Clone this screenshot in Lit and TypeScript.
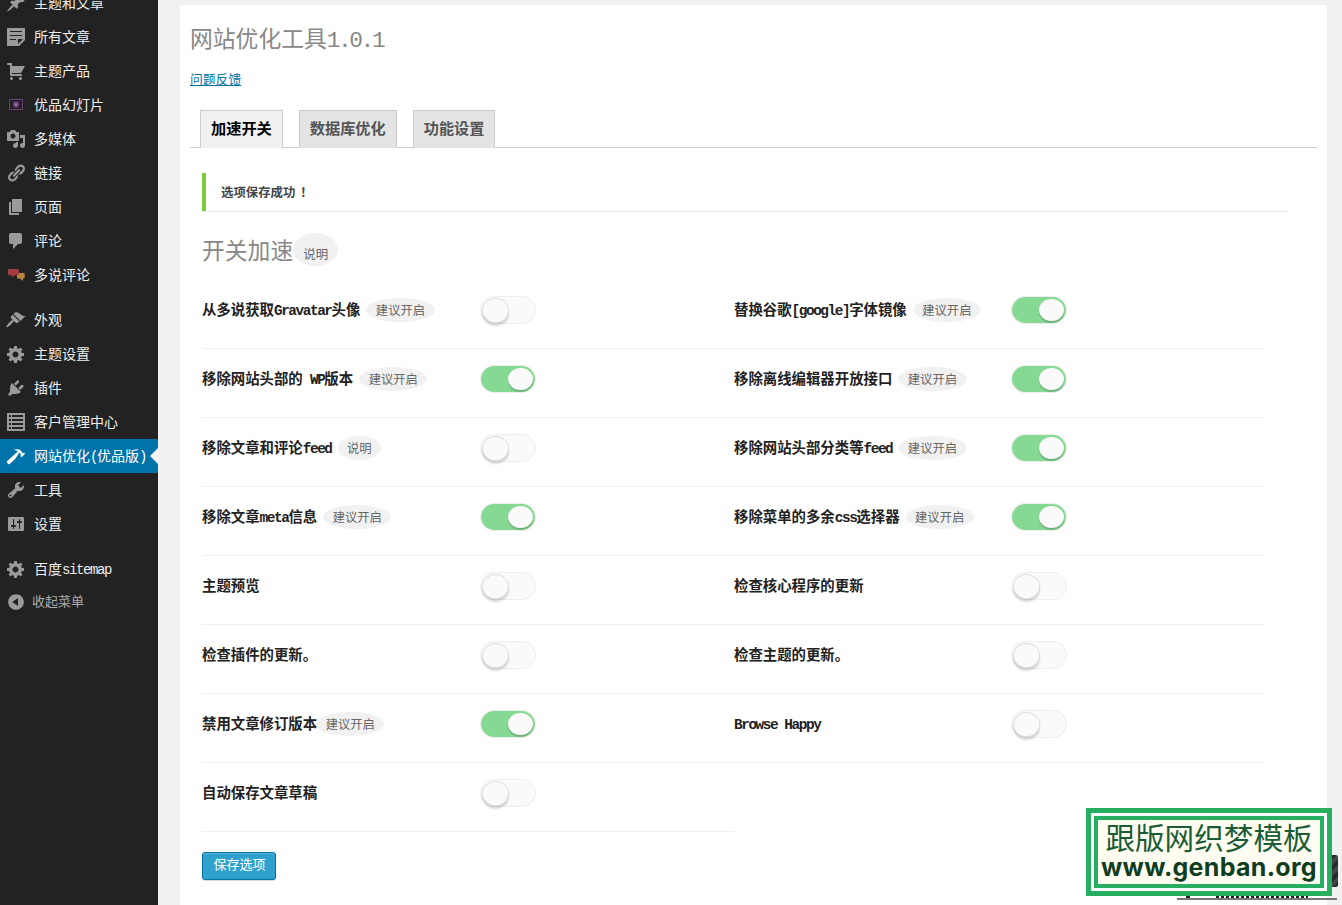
import { LitElement, html, css, svg } from "lit";
import { customElement } from "lit/decorators.js";

const I: Record<string, string> = {
  pin: "M10.44 3.02l1.82-1.82 6.36 6.35-1.83 1.82c-1.05-.68-2.48-.57-3.41.36l-.75.75c-.92.93-1.04 2.35-.35 3.41l-1.83 1.82-2.41-2.41-2.8 2.79c-.42.42-3.38 2.71-3.8 2.29s1.86-3.39 2.28-3.81l2.79-2.79L4.1 9.36l1.83-1.82c1.05.69 2.48.57 3.4-.36l.75-.75c.93-.92 1.05-2.35.36-3.41z",
  aside: "M1 1h18v12l-6 6H1V1zm3 3v1h12V4H4zm0 4v1h12V8H4zm6 5v-1H4v1h6zm2 4l5-5h-5v5z",
  cart: "M6 13h9c.55 0 1 .45 1 1s-.45 1-1 1H5c-.55 0-1-.45-1-1V4H2c-.55 0-1-.45-1-1s.45-1 1-1h3c.55 0 1 .45 1 1v2h13l-4 7H6v1zm-.5 3c.83 0 1.5.67 1.5 1.5S6.33 19 5.5 19 4 18.33 4 17.5 4.67 16 5.5 16zm9 0c.83 0 1.5.67 1.5 1.5s-.67 1.5-1.5 1.5-1.5-.67-1.5-1.5.67-1.5 1.5-1.5z",
  media: "M13 11V4c0-.55-.45-1-1-1h-1.67L9 1H5L3.67 3H2c-.55 0-1 .45-1 1v7c0 .55.45 1 1 1h10c.55 0 1-.45 1-1zM7 4.5c1.38 0 2.5 1.12 2.5 2.5S8.38 9.5 7 9.5 4.5 8.38 4.5 7 5.62 4.5 7 4.5zM14 6h5v10.5c0 1.38-1.12 2.5-2.5 2.5S14 17.88 14 16.5s1.12-2.5 2.5-2.5c.17 0 .34.02.5.05V9h-3V6zm-4 8.05V13h2v3.5c0 1.38-1.12 2.5-2.5 2.5S7 17.88 7 16.5 8.12 14 9.5 14c.17 0 .34.02.5.05z",
  link: "M17.74 2.76c1.68 1.69 1.68 4.41 0 6.1l-1.53 1.52c-1.12 1.12-2.7 1.47-4.14 1.09l2.62-2.61.76-.77.76-.76c.84-.84.84-2.2 0-3.04-.84-.85-2.2-.85-3.04 0l-.77.76-3.38 3.38c-.37-1.44-.02-3.02 1.1-4.14l1.52-1.53c1.69-1.68 4.42-1.68 6.1 0zM8.59 13.43l5.34-5.34c.42-.42.42-1.1 0-1.52-.44-.43-1.13-.39-1.53 0l-5.33 5.34c-.42.42-.42 1.1 0 1.52.44.43 1.13.39 1.52 0zm-.76 2.29l4.14-4.15c.38 1.44.03 3.02-1.09 4.14l-1.52 1.53c-1.69 1.68-4.41 1.68-6.1 0-1.68-1.68-1.68-4.42 0-6.1l1.53-1.52c1.12-1.12 2.7-1.47 4.14-1.1l-4.14 4.15c-.85.84-.85 2.2 0 3.05.84.84 2.2.84 3.04 0z",
  page: "M6 15V2h10v13H6zm-1 1h8v2H3V5h2v11z",
  comment: "M5 2h9c1.1 0 2 .9 2 2v7c0 1.1-.9 2-2 2h-2l-5 5v-5H5c-1.1 0-2-.9-2-2V4c0-1.1.9-2 2-2z",
  brush: "M14.48 11.06L7.41 3.99l1.5-1.5c.5-.56 2.3-.47 3.51.32 1.21.8 1.43 1.28 2.91 2.1 1.18.64 2.45 1.26 4.45.85zm-.71.71L6.7 4.7 4.93 6.47c-.39.39-.39 1.02 0 1.41l1.06 1.06c.39.39.39 1.03 0 1.42-.6.6-1.43 1.11-2.21 1.69-.35.26-.7.53-1.01.84-1.43 1.43-2.84 3.97-2.42 4.39s2.96-.99 4.39-2.42c.31-.31.58-.66.84-1.01.58-.78 1.09-1.61 1.69-2.21.39-.39 1.03-.39 1.42 0l1.06 1.06c.39.39 1.02.39 1.41 0z",
  gear: "M18 12h-2.18c-.17.7-.44 1.35-.81 1.93l1.54 1.54-2.1 2.1-1.54-1.54c-.58.36-1.23.63-1.91.79V19H8v-2.18c-.68-.16-1.33-.43-1.91-.79l-1.54 1.54-2.12-2.12 1.54-1.54c-.36-.58-.63-1.23-.79-1.91H1V9.03h2.17c.16-.7.44-1.35.8-1.94L2.43 5.55l2.1-2.1 1.54 1.54c.58-.37 1.24-.64 1.93-.81V2h3v2.18c.68.16 1.33.43 1.91.79l1.54-1.54 2.12 2.12-1.54 1.54c.36.59.64 1.24.8 1.94H18V12zm-8.5 1.5c1.66 0 3-1.34 3-3s-1.34-3-3-3-3 1.34-3 3 1.34 3 3 3z",
  plug: "M13.11 4.36L9.87 7.6 8 5.73l3.24-3.24c.35-.34 1.05-.2 1.56.32.52.51.66 1.21.31 1.55zm-8 1.77l.91-1.12 9.01 9.01-1.19.84c-.71.71-2.63 1.16-3.82 1.16H6.14L4.9 17.26c-.59.59-1.54.59-2.12 0-.59-.58-.59-1.53 0-2.12l1.24-1.24v-3.88c0-1.13.4-3.19 1.09-3.89zm7.26 3.97l3.24-3.24c.34-.35 1.04-.21 1.55.31.52.51.66 1.21.31 1.55l-3.24 3.25z",
  list: "M1 1h18v18H1V1zm2 2v2h2V3H3zm3 0v2h11V3H6zM3 7v2h2V7H3zm3 0v2h11V7H6zm-3 4v2h2v-2H3zm3 0v2h11v-2H6zm-3 4v2h2v-2H3zm3 0v2h11v-2H6z",
  hammer: "M17.7 6.32l1.41 1.42-3.47 3.41-1.42-1.42.84-.82c-.32-.76-.81-1.57-1.51-2.31l-4.61 6.59-5.26 4.7c-.39.39-1.02.39-1.42 0l-1.2-1.21c-.39-.39-.39-1.02 0-1.41l10.97-9.92c-1.37-.86-3.21-1.46-5.67-1.48 2.7-.82 4.95-.93 6.58-.3 1.7.66 2.82 2.02 3.52 3.59l1.44-.04z",
  tools: "M16.68 9.77c-1.34 1.34-3.3 1.67-4.95.99l-5.41 6.52c-.99.99-2.59.99-3.58 0s-.99-2.59 0-3.57l6.52-5.42c-.68-1.65-.35-3.61.99-4.95 1.28-1.28 3.12-1.62 4.72-1.06l-2.89 2.89 2.82 2.82 2.86-2.87c.53 1.58.18 3.39-1.08 4.65zM3.81 16.21c.4.39 1.04.39 1.43 0 .4-.4.4-1.04 0-1.43-.39-.4-1.03-.4-1.43 0-.39.39-.39 1.03 0 1.43z",
  settings: "M18 16V4c0-.55-.45-1-1-1H3c-.55 0-1 .45-1 1v12c0 .55.45 1 1 1h14c.55 0 1-.45 1-1zM8 11h1c.55 0 1 .45 1 1s-.45 1-1 1H8v1.5c0 .28-.22.5-.5.5s-.5-.22-.5-.5V13H6c-.55 0-1-.45-1-1s.45-1 1-1h1V5.5c0-.28.22-.5.5-.5s.5.22.5.5V11zm5-2h-1c-.55 0-1-.45-1-1s.45-1 1-1h1V5.5c0-.28.22-.5.5-.5s.5.22.5.5V7h1c.55 0 1 .45 1 1s-.45 1-1 1h-1v5.5c0 .28-.22.5-.5.5s-.5-.22-.5-.5V9z",
  collapse: "M10 2.16c4.33 0 7.84 3.51 7.84 7.84s-3.51 7.84-7.84 7.84S2.16 14.33 2.16 10 5.71 2.16 10 2.16zm2 11.72V6.12L6.18 9.97z",
};

function icon(name: string) {
  if (name === "slides")
    return html`<svg class="ic" viewBox="0 0 20 20"><rect x="3.5" y="4.5" width="13" height="10" fill="none" stroke="#6b3f78" stroke-width="1"></rect><circle cx="10" cy="9.5" r="3.2" fill="#6b3f78"></circle><circle cx="10" cy="9.5" r="1" fill="#b79ac0"></circle></svg>`;
  if (name === "duoshuo")
    return html`<svg class="ic" viewBox="0 0 20 20"><path fill="#b8863f" d="M11 8h6.5c.8 0 1.2.5 1.2 1.2v3c0 .7-.4 1.2-1.2 1.2H17V16l-3-2.6h-3z"></path><path fill="#a33b3f" d="M3.5 4h8c1 0 1.500.6 1.500 1.400v3.400c0 .8-.5 1.400-1.500 1.400H8.500L6 12.500v-2.300H3.500c-1 0-1.500-.6-1.500-1.400V5.400C2 4.600 2.500 4 3.500 4z"></path></svg>`;
  return html`<svg class="ic" viewBox="0 0 20 20">${svg`<path fill="currentColor" fill-rule="evenodd" d=${I[name]}></path>`}</svg>`;
}

function t(s: string) {
  const parts = s.split(/( ?[\x21-\x7e]+(?: [\x21-\x7e]+)*)/);
  return parts.map((p, i) => (i % 2 ? html`<span class="lat">${p}</span>` : p));
}

type Row = { l: string; b?: string; on?: boolean; tight?: boolean };
const rows: Row[] = [
  { l: "从多说获取Gravatar头像", b: "建议开启" },
  { l: "替换谷歌[google]字体镜像", b: "建议开启", on: true },
  { l: "移除网站头部的 WP版本", b: "建议开启", on: true },
  { l: "移除离线编辑器开放接口", b: "建议开启", on: true },
  { l: "移除文章和评论feed", b: "说明" },
  { l: "移除网站头部分类等feed", b: "建议开启", on: true },
  { l: "移除文章meta信息", b: "建议开启", on: true },
  { l: "移除菜单的多余css选择器", b: "建议开启", on: true },
  { l: "主题预览" },
  { l: "检查核心程序的更新" },
  { l: "检查插件的更新。" },
  { l: "检查主题的更新。" },
  { l: "禁用文章修订版本", b: "建议开启", on: true, tight: true },
  { l: "Browse Happy" },
  { l: "自动保存文章草稿" },
];

const menu1 = [
  ["pin", "主题和文章"], ["aside", "所有文章"], ["cart", "主题产品"], ["slides", "优品幻灯片"],
  ["media", "多媒体"], ["link", "链接"], ["page", "页面"], ["comment", "评论"], ["duoshuo", "多说评论"],
];
const menu2 = [
  ["brush", "外观"], ["gear", "主题设置"], ["plug", "插件"], ["list", "客户管理中心"],
  ["hammer", "网站优化(优品版)", "active"], ["tools", "工具"], ["settings", "设置"],
];

@customElement("app-root")
export class AppRoot extends LitElement {
  static styles = css`
    :host {
      display: flex;
      height: 100vh;
      overflow: hidden;
      background: #f1f1f1;
      font-family: "Noto Sans CJK SC", "Liberation Sans", sans-serif;
      font-size: 13px;
      color: #444;
    }
    .lat { font-family: "Liberation Mono", monospace; font-size: 1em; letter-spacing: -0.1em; line-height: 1; }
    .side { flex: 0 0 158px; background: #222; color: #eee; font-size: 14px; height: 100%; overflow: hidden; }
    .menu { margin-top: -14px; }
    .sep { height: 11px; }
    .item {
      position: relative;
      height: 34px;
      display: flex;
      align-items: center;
      padding-left: 6px;
      gap: 8px;
      color: #eee;
      white-space: nowrap;
    }
    .item > span { margin-top: -2px; line-height: 20px; }
    .ic { width: 20px; height: 20px; flex: none; color: #9a9a9a; }
    .item.active { background: #0073aa; color: #fff; }
    .item.active .ic { color: #fff; }
    .item.active::after {
      content: "";
      position: absolute;
      right: 0;
      top: 9px;
      border: 8px solid transparent;
      border-right-color: #f1f1f1;
      border-left-width: 0;
    }
    .item.collapse { color: #aaa; font-size: 13px; padding-left: 6px; height: 32px; gap: 6px; }
    .main { flex: 1; padding: 5px 15px 0 22px; min-width: 0; }
    .panel { background: #fff; height: 100%; padding: 18px 10px 0; box-sizing: border-box; }
    h2 { margin: 0; font-size: 22.8px; font-weight: 400; line-height: 30px; color: #888; white-space: nowrap; }
    h2 .lat { letter-spacing: -2.4px; }
    .fb { display: block; margin-top: 16px; line-height: 20px; font-size: 12.8px; color: #0073aa; text-decoration: underline; width: max-content; }
    .tabs { margin-top: 21px; height: 38px; box-sizing: border-box; border-bottom: 1px solid #ccc; padding-left: 10px; display: flex; gap: 16px; }
    .tab {
      height: 38px;
      box-sizing: border-box;
      padding: 0 10px 6px;
      display: flex;
      align-items: center;
      border: 1px solid #ccc;
      border-bottom: 0;
      background: #e4e4e4;
      color: #555;
      font-size: 15.2px;
      font-weight: 700;
    }
    .tab.on { background: #f1f1f1; color: #000; }
    .notice {
      margin: 25px 30px 0 12px;
      height: 38px;
      box-sizing: border-box;
      border-left: 4px solid #7ad03a;
      box-shadow: 0 1px 1px rgba(0, 0, 0, 0.08);
      padding-left: 15px;
      display: flex;
      align-items: center;
      font-size: 12.4px;
      font-weight: 700;
      color: #444;
    }
    .bang { margin-left: 5px; }
    h3 { margin: 22px 0 0 12px; display: flex; align-items: center; height: 33px; font-size: 22.8px; font-weight: 400; color: #888; }
    .pill {
      background: #f1f1f1;
      border-radius: 50%;
      color: #666;
      font-size: 12.3px;
      font-weight: 400;
      display: inline-flex;
      align-items: center;
      white-space: nowrap;
    }
    h3 .pill { height: 33px; padding: 7px 10px 0; box-sizing: border-box; margin-left: 0; font-size: 12.5px; }
    .grid { margin: 14px 0 0 12px; display: grid; grid-template-columns: 532px 530px; }
    .row {
      height: 69px;
      box-sizing: border-box;
      padding: 16px 0 24px;
      border-bottom: 1px solid #f1f1f1;
      display: flex;
      align-items: center;
    }
    .lab { flex: 0 0 278px; display: flex; align-items: center; white-space: pre; }
    .row:nth-child(even) .lab { flex-basis: 277px; }
    .name { font-size: 14.4px; font-weight: 700; color: #222; line-height: 20px; margin-top: -3px; }
    .row .pill { height: 24px; padding: 0 9.5px; margin-left: 6px; }
    .row .pill.tight { margin-left: -1px; }
    .sw {
      position: relative;
      width: 56px;
      height: 28px;
      box-sizing: border-box;
      border: 1px solid #eee;
      border-radius: 14px;
      background: #fafafa;
    }
    .sw::after {
      content: "";
      position: absolute;
      left: 1px;
      top: 1px;
      width: 25px;
      height: 23px;
      border-radius: 50%;
      background: #fafafa;
      border: 1px solid #ddd;
      box-sizing: content-box;
      box-shadow: 0 3px 2px rgba(0, 0, 0, 0.15);
    }
    .sw.on { width: 54px; height: 26px; margin-left: 1px; background: #86d993; border-color: #86d993; box-shadow: 0 0 0 1px #eee; }
    .sw.on::after { left: 26px; top: 1px; width: 25px; height: 22px; border: 0; background: #fafafa; box-shadow: 0 2px 1px rgba(0, 0, 0, 0.18); }
    .save {
      margin: 20px 0 0 12px;
      width: 74px;
      height: 28px;
      box-sizing: border-box;
      border: 1px solid #0074a2;
      border-radius: 3px;
      background: #2ea2cc;
      color: #fff;
      font: inherit;
      font-size: 13px;
      padding: 0 0 6px 1px;
      box-shadow: inset 0 1px 0 rgba(120, 200, 230, 0.5), 0 1px 0 rgba(0, 0, 0, 0.15);
    }
    .mark {
      position: absolute;
      left: 1086px;
      top: 808px;
      width: 246px;
      height: 88px;
      box-sizing: border-box;
      border: 5px solid #27ae60;
      background: #fff;
      padding: 3px;
    }
    .mark-in {
      height: 100%;
      box-sizing: border-box;
      border: 4px solid #27ae60;
      background: #fffdf2;
      padding-bottom: 4px;
      display: flex;
      flex-direction: column;
      align-items: center;
      justify-content: center;
      white-space: nowrap;
    }
    .m1 { font-size: 29.6px; line-height: 33px; color: #1a5c35; }
    .m2 { font-family: Inter, "DejaVu Sans", sans-serif; font-weight: 700; font-size: 25px; line-height: 28px; color: #0f3d20; letter-spacing: 0.3px; }
    .behind {
      position: absolute;
      left: 1331px;
      top: 855px;
      width: 7px;
      height: 32px;
      border-radius: 0 2px 2px 0;
      background: repeating-linear-gradient(135deg, #2a2a2a 0 4px, #444 4px 8px);
    }
    .behind2 { position: absolute; left: 1177px; top: 898px; width: 160px; height: 2px; background: #777; }
    .behind3 {
      position: absolute;
      left: 1216px;
      top: 896px;
      width: 92px;
      height: 2px;
      background: repeating-linear-gradient(90deg, #222 0 3px, transparent 3px 5px);
    }
    .behind4 { position: absolute; left: 1186px; top: 896px; width: 4px; height: 2px; background: #222; }
  `;

  render() {
    return html`
      <nav class="side">
        <div class="menu">
          ${menu1.map((m) => html`<div class="item">${icon(m[0])}<span>${t(m[1])}</span></div>`)}
          <div class="sep"></div>
          ${menu2.map((m) => html`<div class="item ${m[2] || ""}">${icon(m[0])}<span>${t(m[1])}</span></div>`)}
          <div class="sep"></div>
          <div class="item">${icon("gear")}<span>${t("百度sitemap")}</span></div>
          <div class="item collapse">${icon("collapse")}<span>收起菜单</span></div>
        </div>
      </nav>
      <main class="main">
        <div class="panel">
          <h2>${t("网站优化工具1.0.1")}</h2>
          <a class="fb">问题反馈</a>
          <div class="tabs">
            <div class="tab on">加速开关</div>
            <div class="tab">数据库优化</div>
            <div class="tab">功能设置</div>
          </div>
          <div class="notice">选项保存成功<span class="bang">！</span></div>
          <h3>开关加速<span class="pill">说明</span></h3>
          <div class="grid">
            ${rows.map(
              (r) => html`<div class="row">
                <div class="lab"><span class="name">${t(r.l)}</span>${r.b ? html`<span class="pill ${r.tight ? "tight" : ""}">${r.b}</span>` : ""}</div>
                <div class="sw ${r.on ? "on" : ""}"></div>
              </div>`
            )}
          </div>
          <button class="save">保存选项</button>
        </div>
      </main>
      <div class="behind"></div>
      <div class="behind2"></div>
      <div class="behind3"></div>
      <div class="behind4"></div>
      <div class="mark"><div class="mark-in"><div class="m1">跟版网织梦模板</div><div class="m2">www.genban.org</div></div></div>
    `;
  }
}
